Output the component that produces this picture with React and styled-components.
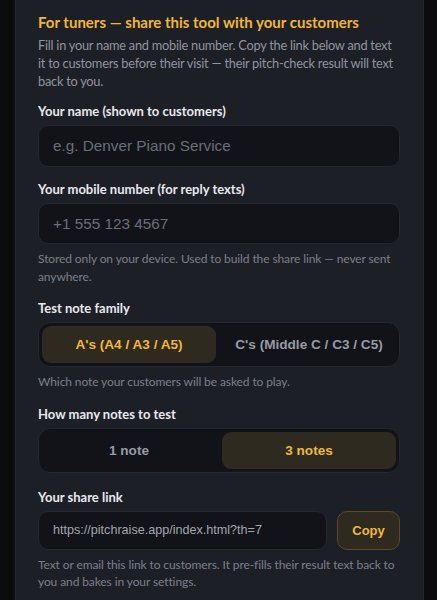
import React from "react";
import styled, { createGlobalStyle } from "styled-components";

const Global = createGlobalStyle`
  html, body { margin: 0; padding: 0; background: #0b0c0e; }
  body { font-family: Lato, "Noto Sans", sans-serif; -webkit-font-smoothing: antialiased; }
  * { box-sizing: border-box; }
`;

const Page = styled.div`
  padding: 0 13px 0 15px;
  min-height: 600px;
`;

const Card = styled.section`
  background: #1d1f27;
  border: 1px solid #262933;
  border-top: none;
  border-radius: 0 0 14px 14px;
  padding: 12px 23px 24px 22px;
`;

const Title = styled.h2`
  margin: 0;
  font-size: 15px;
  line-height: 20px;
  font-weight: 700;
  color: #f2b632;
`;

const Intro = styled.p`
  margin: 4px 0 0;
  font-size: 12.8px;
  line-height: 18px;
  letter-spacing: -0.25px;
  color: #90949e;
`;

const Field = styled.div`
  margin-top: ${(p) => p.$gap || 14}px;
  display: flex;
  flex-direction: column;
`;

const Label = styled.label`
  font-size: 13px;
  line-height: 18px;
  font-weight: 700;
  color: #e8e9ee;
  margin-bottom: 5px;
`;

const Input = styled.input`
  height: ${(p) => p.$h || 42}px;
  width: 100%;
  background: #111318;
  border: 1px solid #242730;
  border-radius: 10px;
  padding: 0 14px;
  font-family: "Liberation Sans", Arial, sans-serif;
  font-size: ${(p) => p.$fs || 15.3}px;
  color: #a2a6ae;
  outline: none;
  &::placeholder { color: #6a6e78; }
`;

const Hint = styled.p`
  margin: 6px 0 0;
  font-size: 12px;
  line-height: 17.5px;
  letter-spacing: -0.1px;
  color: #7b7f89;
`;

const Segmented = styled.div`
  display: grid;
  grid-template-columns: 1fr 1fr;
  gap: 6px;
  padding: 3px;
  height: 45px;
  background: #111318;
  border: 1px solid #242730;
  border-radius: 12px;
`;

const SegButton = styled.button`
  border: none;
  border-radius: 9px;
  background: ${(p) => (p.$active ? "#2e2a20" : "transparent")};
  color: ${(p) => (p.$active ? "#f0b83a" : "#979ba5")};
  font-family: "Liberation Sans", Arial, sans-serif;
  font-weight: 700;
  font-size: 13.6px;
  cursor: pointer;
  padding: 0;
`;

const ShareRow = styled.div`
  display: flex;
  gap: 10px;
  align-items: stretch;
`;

const CopyButton = styled.button`
  flex: 0 0 63px;
  height: 39px;
  border-radius: 10px;
  border: 1px solid #5a4a26;
  background: #2e2a20;
  color: #f0b83a;
  font-family: "Liberation Sans", Arial, sans-serif;
  font-weight: 700;
  font-size: 13px;
  cursor: pointer;
`;

export default function App() {
  return (
    <Page>
      <Global />
      <Card>
        <Title>For tuners — share this tool with your customers</Title>
        <Intro>
          Fill in your name and mobile number. Copy the link below and text it to
          customers before their visit — their pitch-check result will text back to you.
        </Intro>

        <Field $gap={12}>
          <Label>Your name (shown to customers)</Label>
          <Input placeholder="e.g. Denver Piano Service" />
        </Field>

        <Field $gap={13}>
          <Label>Your mobile number (for reply texts)</Label>
          <Input $h={41} placeholder="+1 555 123 4567" />
          <Hint>Stored only on your device. Used to build the share link — never sent anywhere.</Hint>
        </Field>

        <Field>
          <Label>Test note family</Label>
          <Segmented>
            <SegButton $active>A's (A4 / A3 / A5)</SegButton>
            <SegButton>C's (Middle C / C3 / C5)</SegButton>
          </Segmented>
          <Hint>Which note your customers will be asked to play.</Hint>
        </Field>

        <Field>
          <Label>How many notes to test</Label>
          <Segmented>
            <SegButton>1 note</SegButton>
            <SegButton $active>3 notes</SegButton>
          </Segmented>
        </Field>

        <Field $gap={15}>
          <Label>Your share link</Label>
          <ShareRow>
            <Input $h={39} $fs={12.6} readOnly value="https://pitchraise.app/index.html?th=7" />
            <CopyButton>Copy</CopyButton>
          </ShareRow>
          <Hint>Text or email this link to customers. It pre-fills their result text back to you and bakes in your settings.</Hint>
        </Field>
      </Card>
    </Page>
  );
}
